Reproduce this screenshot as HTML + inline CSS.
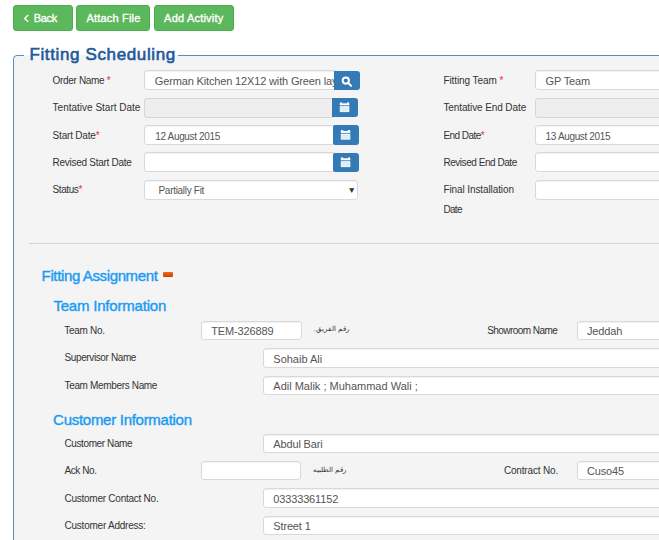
<!DOCTYPE html>
<html><head><meta charset="utf-8"><style>
html,body{margin:0;padding:0;background:#fff;width:659px;height:540px;overflow:hidden;position:relative;font-family:"Liberation Sans", sans-serif;}
.t{position:absolute;white-space:nowrap;font-family:"Liberation Sans", sans-serif;}
.b{position:absolute;}
</style></head><body>
<div class="b" style="left:13px;top:5px;width:60px;height:26px;background:#5cb85c;border:1px solid #4cae4c;border-radius:3px;box-sizing:border-box;"></div>
<div class="b" style="left:76px;top:5px;width:74px;height:26px;background:#5cb85c;border:1px solid #4cae4c;border-radius:3px;box-sizing:border-box;"></div>
<div class="b" style="left:154px;top:5px;width:80px;height:26px;background:#5cb85c;border:1px solid #4cae4c;border-radius:3px;box-sizing:border-box;"></div>
<svg class="b" style="left:0;top:0" width="40" height="40"><polyline points="28.2,15 24.6,18.4 28.2,21.8" fill="none" stroke="#fff" stroke-width="1.4"/></svg>
<div class="t" style="left:33.8px;top:13.29px;font-size:11px;line-height:11px;color:#fff;font-weight:normal;letter-spacing:-0.35px;-webkit-text-stroke:0.35px #fff;">Back</div>
<div class="t" style="left:86.4px;top:13.29px;font-size:11px;line-height:11px;color:#fff;font-weight:normal;letter-spacing:0.2px;-webkit-text-stroke:0.35px #fff;">Attach File</div>
<div class="t" style="left:164.1px;top:13.29px;font-size:11px;line-height:11px;color:#fff;font-weight:normal;letter-spacing:0.2px;-webkit-text-stroke:0.35px #fff;">Add Activity</div>
<div class="b" style="left:13px;top:55px;width:720px;height:600px;border:1px solid #5a8cbd;border-radius:4px;background:#f4f4f4;"></div>
<div class="b" style="left:24px;top:55px;width:154px;height:1px;background:#f4f4f4;"></div>
<div class="b" style="left:24px;top:40px;width:154px;height:15px;background:#fff;"></div>
<div class="t" style="left:29.4px;top:46.11px;font-size:17px;line-height:17px;color:#1f599d;font-weight:normal;letter-spacing:0.63px;-webkit-text-stroke:0.6px #1f599d;">Fitting Scheduling</div>
<div class="t" style="left:52.6px;top:75.83px;font-size:10px;line-height:10px;color:#333;font-weight:normal;letter-spacing:-0.33px;">Order Name <span style="color:#e0332f">*</span></div>
<div class="t" style="left:52.6px;top:103.13px;font-size:10px;line-height:10px;color:#333;font-weight:normal;letter-spacing:0px;">Tentative Start Date</div>
<div class="t" style="left:52.6px;top:130.53px;font-size:10px;line-height:10px;color:#333;font-weight:normal;letter-spacing:-0.2px;">Start Date<span style="color:#e0332f">*</span></div>
<div class="t" style="left:52.6px;top:157.94px;font-size:10px;line-height:10px;color:#333;font-weight:normal;letter-spacing:-0.27px;">Revised Start Date</div>
<div class="t" style="left:52.6px;top:185.44px;font-size:10px;line-height:10px;color:#333;font-weight:normal;letter-spacing:-0.43px;">Status<span style="color:#e0332f">*</span></div>
<div class="b" style="left:144px;top:70px;width:193px;height:20px;background:#fff;border:1px solid #d9d9d9;border-radius:3px;box-sizing:border-box;box-shadow:inset 0 1px 1px rgba(0,0,0,.06);"></div>
<div class="b" style="left:144px;top:98px;width:191px;height:20px;background:#eeeeee;border:1px solid #d6d6d6;border-radius:3px;box-sizing:border-box;"></div>
<div class="b" style="left:144px;top:125px;width:192px;height:20px;background:#fff;border:1px solid #d9d9d9;border-radius:3px;box-sizing:border-box;box-shadow:inset 0 1px 1px rgba(0,0,0,.06);"></div>
<div class="b" style="left:144px;top:152px;width:192px;height:20px;background:#fff;border:1px solid #d9d9d9;border-radius:3px;box-sizing:border-box;box-shadow:inset 0 1px 1px rgba(0,0,0,.06);"></div>
<div class="b" style="left:144px;top:180px;width:214px;height:20px;background:#fff;border:1px solid #d9d9d9;border-radius:3px;box-sizing:border-box;box-shadow:inset 0 1px 1px rgba(0,0,0,.06);"></div>
<div class="b" style="left:334px;top:71px;width:26px;height:19px;background:#337ab7;border-radius:2px 3px 3px 2px;border-radius:0 3px 3px 0;"></div>
<div class="b" style="left:332px;top:98px;width:26px;height:19px;background:#337ab7;border-radius:2px 3px 3px 2px;border-radius:0 3px 3px 0;"></div>
<div class="b" style="left:333px;top:125px;width:26px;height:20px;background:#337ab7;border-radius:2px 3px 3px 2px;"></div>
<div class="b" style="left:333px;top:153px;width:26px;height:19px;background:#337ab7;border-radius:2px 3px 3px 2px;"></div>
<svg class="b" style="left:0;top:0" width="659" height="540" viewBox="0 0 659 540"><circle cx="345.8" cy="80.6" r="3.1" fill="none" stroke="#fff" stroke-width="2"/><line x1="348.3" y1="83.1" x2="351" y2="85.8" stroke="#fff" stroke-width="2" stroke-linecap="round"/><rect x="339.8" y="103.30000000000001" width="9.5" height="2" fill="#fff"/><rect x="340.1" y="102.4" width="2" height="1.5" fill="#fff"/><rect x="347.0" y="102.4" width="2" height="1.5" fill="#fff"/><rect x="339.8" y="106.10000000000001" width="9.5" height="6" fill="#eef5fb"/><path d="M339.8 108.10000000000001 h9.5 M339.8 110.10000000000001 h9.5 M343.0 106.10000000000001 v6 M346.1 106.10000000000001 v6" stroke="#cfe0f0" stroke-width="0.6"/><rect x="340.8" y="130.9" width="9.5" height="2" fill="#fff"/><rect x="341.1" y="130" width="2" height="1.5" fill="#fff"/><rect x="348.0" y="130" width="2" height="1.5" fill="#fff"/><rect x="340.8" y="133.7" width="9.5" height="6" fill="#eef5fb"/><path d="M340.8 135.7 h9.5 M340.8 137.7 h9.5 M344.0 133.7 v6 M347.1 133.7 v6" stroke="#cfe0f0" stroke-width="0.6"/><rect x="340.8" y="158.3" width="9.5" height="2" fill="#fff"/><rect x="341.1" y="157.4" width="2" height="1.5" fill="#fff"/><rect x="348.0" y="157.4" width="2" height="1.5" fill="#fff"/><rect x="340.8" y="161.1" width="9.5" height="6" fill="#eef5fb"/><path d="M340.8 163.1 h9.5 M340.8 165.1 h9.5 M344.0 161.1 v6 M347.1 161.1 v6" stroke="#cfe0f0" stroke-width="0.6"/></svg>
<div class="t" style="left:154.8px;top:76.49px;font-size:11px;line-height:11px;color:#555;font-weight:normal;letter-spacing:-0.15px;width:179.2px;overflow:hidden;white-space:nowrap;">German Kitchen 12X12 with Green lay</div>
<div class="t" style="left:155.3px;top:132.13px;font-size:10px;line-height:10px;color:#555;font-weight:normal;letter-spacing:-0.35px;">12 August 2015</div>
<div class="t" style="left:158.5px;top:186.34px;font-size:10px;line-height:10px;color:#555;font-weight:normal;letter-spacing:-0.3px;">Partially Fit</div>
<div class="t" style="left:347.5px;top:186.00px;font-size:8.5px;line-height:8.5px;color:#333;font-weight:normal;letter-spacing:0px;">&#9660;</div>
<div class="t" style="left:443.4px;top:75.83px;font-size:10px;line-height:10px;color:#333;font-weight:normal;letter-spacing:-0.08px;">Fitting Team <span style="color:#e0332f">*</span></div>
<div class="t" style="left:443.4px;top:103.13px;font-size:10px;line-height:10px;color:#333;font-weight:normal;letter-spacing:-0.1px;">Tentative End Date</div>
<div class="t" style="left:443.4px;top:130.53px;font-size:10px;line-height:10px;color:#333;font-weight:normal;letter-spacing:-0.53px;">End Date<span style="color:#e0332f">*</span></div>
<div class="t" style="left:443.4px;top:157.94px;font-size:10px;line-height:10px;color:#333;font-weight:normal;letter-spacing:-0.45px;">Revised End Date</div>
<div class="t" style="left:443.4px;top:185.44px;font-size:10px;line-height:10px;color:#333;font-weight:normal;letter-spacing:-0.1px;">Final Installation</div>
<div class="t" style="left:443.4px;top:204.73px;font-size:10px;line-height:10px;color:#333;font-weight:normal;letter-spacing:-0.65px;">Date</div>
<div class="b" style="left:535px;top:70px;width:200px;height:20px;background:#fff;border:1px solid #d9d9d9;border-radius:3px;box-sizing:border-box;box-shadow:inset 0 1px 1px rgba(0,0,0,.06);"></div>
<div class="b" style="left:535px;top:98px;width:200px;height:20px;background:#eeeeee;border:1px solid #d6d6d6;border-radius:3px;box-sizing:border-box;"></div>
<div class="b" style="left:535px;top:125px;width:200px;height:20px;background:#fff;border:1px solid #d9d9d9;border-radius:3px;box-sizing:border-box;box-shadow:inset 0 1px 1px rgba(0,0,0,.06);"></div>
<div class="b" style="left:535px;top:152px;width:200px;height:20px;background:#fff;border:1px solid #d9d9d9;border-radius:3px;box-sizing:border-box;box-shadow:inset 0 1px 1px rgba(0,0,0,.06);"></div>
<div class="b" style="left:535px;top:180px;width:200px;height:20px;background:#fff;border:1px solid #d9d9d9;border-radius:3px;box-sizing:border-box;box-shadow:inset 0 1px 1px rgba(0,0,0,.06);"></div>
<div class="t" style="left:545.6px;top:76.49px;font-size:11px;line-height:11px;color:#555;font-weight:normal;letter-spacing:-0.15px;">GP Team</div>
<div class="t" style="left:545.6px;top:132.13px;font-size:10px;line-height:10px;color:#555;font-weight:normal;letter-spacing:-0.35px;">13 August 2015</div>
<div class="b" style="left:29px;top:243px;width:700px;height:1px;background:#d4d4d4;"></div>
<div class="t" style="left:41.6px;top:267.90px;font-size:15px;line-height:15px;color:#1b9bf2;font-weight:normal;letter-spacing:-0.37px;-webkit-text-stroke:0.4px #1b9bf2;">Fitting Assignment</div>
<div class="b" style="left:163px;top:272px;width:10px;height:5px;background:linear-gradient(#ee6d1a,#c73e05);border-radius:1px;"></div>
<div class="t" style="left:53.4px;top:298.30px;font-size:15px;line-height:15px;color:#1b9bf2;font-weight:normal;letter-spacing:-0.2px;-webkit-text-stroke:0.4px #1b9bf2;">Team Information</div>
<div class="t" style="left:53.1px;top:412.10px;font-size:15px;line-height:15px;color:#1b9bf2;font-weight:normal;letter-spacing:-0.28px;-webkit-text-stroke:0.4px #1b9bf2;">Customer Information</div>
<div class="t" style="left:64.3px;top:325.94px;font-size:10px;line-height:10px;color:#333;font-weight:normal;letter-spacing:-0.29px;">Team No.</div>
<div class="t" style="left:64.5px;top:353.24px;font-size:10px;line-height:10px;color:#333;font-weight:normal;letter-spacing:-0.38px;">Supervisor Name</div>
<div class="t" style="left:64.5px;top:380.54px;font-size:10px;line-height:10px;color:#333;font-weight:normal;letter-spacing:-0.34px;">Team Members Name</div>
<div class="t" style="left:487.2px;top:325.94px;font-size:10px;line-height:10px;color:#333;font-weight:normal;letter-spacing:-0.55px;">Showroom Name</div>
<div class="t" style="left:64.5px;top:438.74px;font-size:10px;line-height:10px;color:#333;font-weight:normal;letter-spacing:-0.39px;">Customer Name</div>
<div class="t" style="left:64.5px;top:466.24px;font-size:10px;line-height:10px;color:#333;font-weight:normal;letter-spacing:-0.43px;">Ack No.</div>
<div class="t" style="left:64.5px;top:493.74px;font-size:10px;line-height:10px;color:#333;font-weight:normal;letter-spacing:-0.25px;">Customer Contact No.</div>
<div class="t" style="left:64.5px;top:521.24px;font-size:10px;line-height:10px;color:#333;font-weight:normal;letter-spacing:-0.23px;">Customer Address:</div>
<div class="t" style="left:503.9px;top:466.24px;font-size:10px;line-height:10px;color:#333;font-weight:normal;letter-spacing:-0.17px;">Contract No.</div>
<div class="b" style="left:201px;top:321px;width:101px;height:19px;background:#fff;border:1px solid #d9d9d9;border-radius:3px;box-sizing:border-box;box-shadow:inset 0 1px 1px rgba(0,0,0,.06);"></div>
<div class="b" style="left:577px;top:321px;width:150px;height:19px;background:#fff;border:1px solid #d9d9d9;border-radius:3px;box-sizing:border-box;box-shadow:inset 0 1px 1px rgba(0,0,0,.06);"></div>
<div class="b" style="left:263px;top:348px;width:460px;height:20px;background:#fff;border:1px solid #d9d9d9;border-radius:3px;box-sizing:border-box;box-shadow:inset 0 1px 1px rgba(0,0,0,.06);"></div>
<div class="b" style="left:263px;top:376px;width:460px;height:19px;background:#fff;border:1px solid #d9d9d9;border-radius:3px;box-sizing:border-box;box-shadow:inset 0 1px 1px rgba(0,0,0,.06);"></div>
<div class="b" style="left:263px;top:434px;width:460px;height:19px;background:#fff;border:1px solid #d9d9d9;border-radius:3px;box-sizing:border-box;box-shadow:inset 0 1px 1px rgba(0,0,0,.06);"></div>
<div class="b" style="left:201px;top:461px;width:100px;height:19px;background:#fff;border:1px solid #d9d9d9;border-radius:3px;box-sizing:border-box;box-shadow:inset 0 1px 1px rgba(0,0,0,.06);"></div>
<div class="b" style="left:577px;top:461px;width:150px;height:19px;background:#fff;border:1px solid #d9d9d9;border-radius:3px;box-sizing:border-box;box-shadow:inset 0 1px 1px rgba(0,0,0,.06);"></div>
<div class="b" style="left:263px;top:488px;width:460px;height:20px;background:#fff;border:1px solid #d9d9d9;border-radius:3px;box-sizing:border-box;box-shadow:inset 0 1px 1px rgba(0,0,0,.06);"></div>
<div class="b" style="left:263px;top:516px;width:460px;height:19px;background:#fff;border:1px solid #d9d9d9;border-radius:3px;box-sizing:border-box;box-shadow:inset 0 1px 1px rgba(0,0,0,.06);"></div>
<div class="t" style="left:211.3px;top:326.19px;font-size:11px;line-height:11px;color:#555;font-weight:normal;letter-spacing:-0.15px;">TEM-326889</div>
<div class="t" style="left:587px;top:326.19px;font-size:11px;line-height:11px;color:#555;font-weight:normal;letter-spacing:-0.15px;">Jeddah</div>
<div class="t" style="left:273.3px;top:353.89px;font-size:11px;line-height:11px;color:#555;font-weight:normal;letter-spacing:0px;">Sohaib Ali</div>
<div class="t" style="left:273.3px;top:381.49px;font-size:11px;line-height:11px;color:#555;font-weight:normal;letter-spacing:0px;">Adil Malik ; Muhammad Wali ;</div>
<div class="t" style="left:273.3px;top:439.39px;font-size:11px;line-height:11px;color:#555;font-weight:normal;letter-spacing:-0.15px;">Abdul Bari</div>
<div class="t" style="left:587px;top:466.39px;font-size:11px;line-height:11px;color:#555;font-weight:normal;letter-spacing:-0.15px;">Cuso45</div>
<div class="t" style="left:273.3px;top:493.89px;font-size:11px;line-height:11px;color:#555;font-weight:normal;letter-spacing:-0.15px;">03333361152</div>
<div class="t" style="left:273.3px;top:521.39px;font-size:11px;line-height:11px;color:#555;font-weight:normal;letter-spacing:-0.15px;">Street 1</div>
<div class="t" style="left:313.6px;top:325.99px;font-size:7.1px;line-height:7.1px;color:#333;font-weight:normal;letter-spacing:0px;"><span dir="rtl">رقم الفريق.</span></div>
<div class="t" style="left:312.8px;top:466.99px;font-size:7.1px;line-height:7.1px;color:#333;font-weight:normal;letter-spacing:0px;"><span dir="rtl">رقم الطلبيه</span></div>
</body></html>
